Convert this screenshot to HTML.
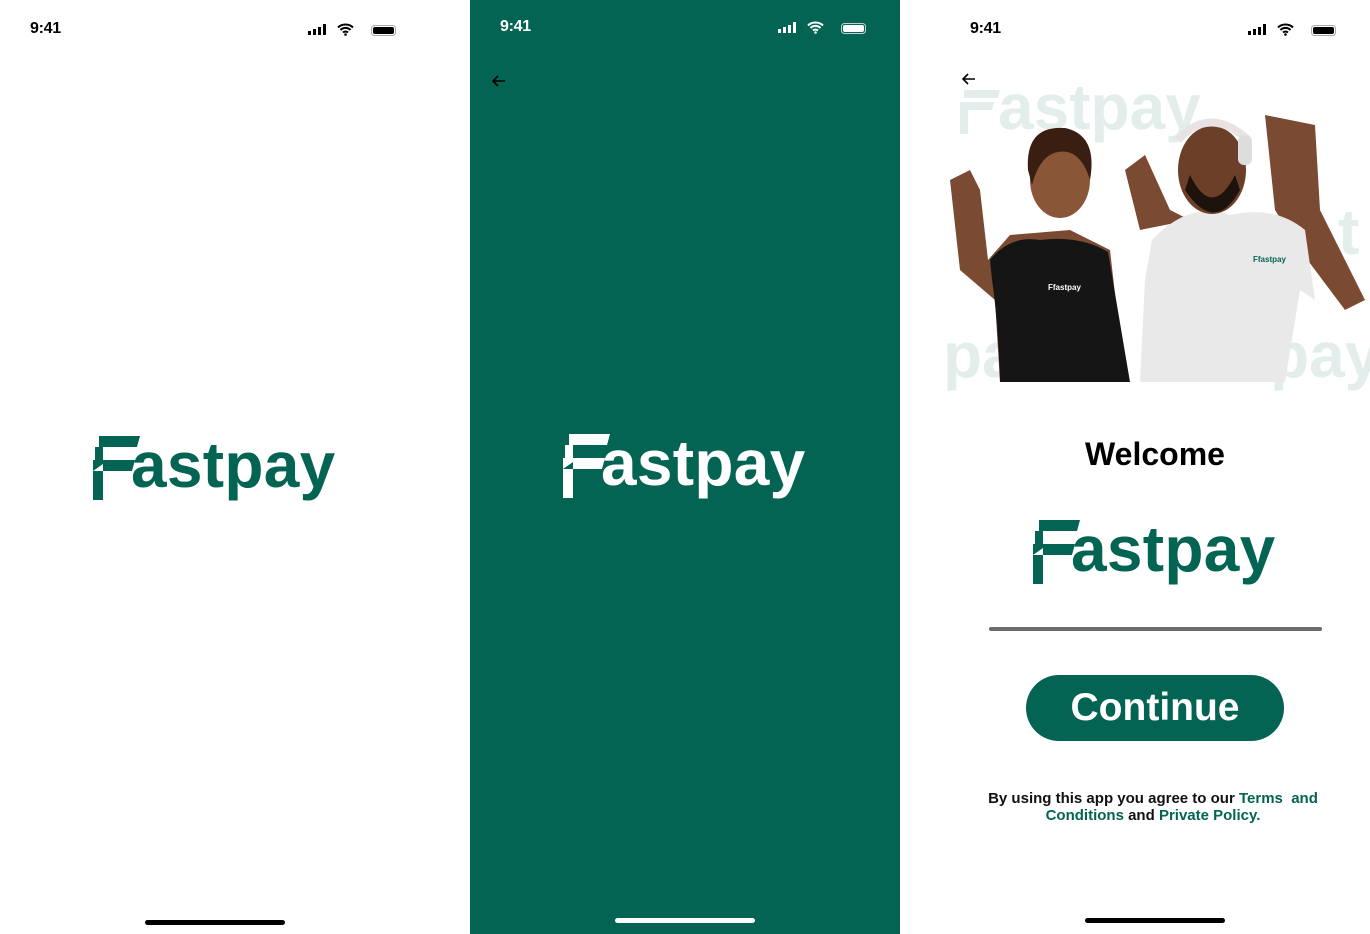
<!DOCTYPE html>
<html><head><meta charset="utf-8"><style>
*{margin:0;padding:0;box-sizing:border-box}
body{width:1370px;height:934px;position:relative;overflow:hidden;background:#fff;font-family:"Liberation Sans",sans-serif}
.scr{position:absolute;top:0;height:934px;width:430px;overflow:hidden}
.time{position:absolute;left:30px;top:20px;font-size:16px;font-weight:bold;letter-spacing:-0.3px}
.icons{position:absolute;left:308px;top:23px}
.home{position:absolute;left:145px;top:920px;width:140px;height:5px;border-radius:3px}
.logo{position:absolute;width:250px;height:70px}
.logo svg{position:absolute;left:0;top:0}
.logo span{position:absolute;left:38px;top:-8px;font-size:64px;font-weight:bold;letter-spacing:0.3px}
.ghost{position:absolute;font-weight:bold;color:#e3eeec;font-size:64px}
</style></head><body>

<div class="scr" style="left:0;background:#fff">
 <div class="time">9:41</div>
 <svg class="icons" width="90" height="16" viewBox="0 0 90 16">
  <rect x="0" y="8" width="3" height="4" fill="#000"/><rect x="5" y="6" width="3" height="6" fill="#000"/><rect x="10" y="4" width="3" height="8" fill="#000"/><rect x="15" y="1" width="3" height="11" fill="#000"/>
  <path d="M30 4.5a11 11 0 0 1 15 0M32.5 7a7 7 0 0 1 10 0M35 9.5a3.5 3.5 0 0 1 5 0" stroke="#000" stroke-width="2" fill="none"/><circle cx="37.5" cy="11.5" r="1.3" fill="#000"/>
  <rect x="63.5" y="2.5" width="24" height="10" rx="3" fill="none" stroke="#aaa"/><rect x="65" y="4" width="21" height="7" rx="2" fill="#000"/>
 </svg>
 <div class="logo" style="left:93px;top:436px;color:#036453">
  <svg width="50" height="68" viewBox="0 0 50 68"><path d="M6 0H47L44 11H6Z M0 24H42L39 35H10V64H0Z M2 11H10V24H2Z" fill="#036453"/><path d="M0 35L10 28V35Z" fill="#fff"/></svg>
  <span>astpay</span>
 </div>
 <div class="home" style="background:#000"></div>
</div>

<div class="scr" style="left:470px;background:#036453;color:#fff">
 <div class="time" style="top:18px">9:41</div>
 <svg class="icons" style="top:21px" width="90" height="16" viewBox="0 0 90 16">
  <rect x="0" y="8" width="3" height="4" fill="#fff"/><rect x="5" y="6" width="3" height="6" fill="#fff"/><rect x="10" y="4" width="3" height="8" fill="#fff"/><rect x="15" y="1" width="3" height="11" fill="#fff"/>
  <path d="M30 4.5a11 11 0 0 1 15 0M32.5 7a7 7 0 0 1 10 0M35 9.5a3.5 3.5 0 0 1 5 0" stroke="#fff" stroke-width="2" fill="none"/><circle cx="37.5" cy="11.5" r="1.3" fill="#fff"/>
  <rect x="63.5" y="2.5" width="24" height="10" rx="3" fill="none" stroke="#ccc"/><rect x="65" y="4" width="21" height="7" rx="2" fill="#fff"/>
 </svg>
 <svg style="position:absolute;left:21px;top:73px" width="16" height="16" viewBox="0 0 16 16"><path d="M14 8H2M7 3L2 8l5 5" stroke="#000" stroke-width="1.6" fill="none"/></svg>
 <div class="logo" style="left:93px;top:434px;color:#fff">
  <svg width="50" height="68" viewBox="0 0 50 68"><path d="M6 0H47L44 11H6Z M0 24H42L39 35H10V64H0Z M2 11H10V24H2Z" fill="#fff"/><path d="M0 35L10 28V35Z" fill="#036453"/></svg>
  <span>astpay</span>
 </div>
 <div class="home" style="background:#fff;top:918px"></div>
</div>

<div class="scr" style="left:940px;background:#fff">
 <div class="time">9:41</div>
 <svg class="icons" width="90" height="16" viewBox="0 0 90 16">
  <rect x="0" y="8" width="3" height="4" fill="#000"/><rect x="5" y="6" width="3" height="6" fill="#000"/><rect x="10" y="4" width="3" height="8" fill="#000"/><rect x="15" y="1" width="3" height="11" fill="#000"/>
  <path d="M30 4.5a11 11 0 0 1 15 0M32.5 7a7 7 0 0 1 10 0M35 9.5a3.5 3.5 0 0 1 5 0" stroke="#000" stroke-width="2" fill="none"/><circle cx="37.5" cy="11.5" r="1.3" fill="#000"/>
  <rect x="63.5" y="2.5" width="24" height="10" rx="3" fill="none" stroke="#aaa"/><rect x="65" y="4" width="21" height="7" rx="2" fill="#000"/>
 </svg>
 <div class="ghost" style="left:58px;top:70px">astpay</div>
 <svg style="position:absolute;left:20px;top:90px" width="40" height="44" viewBox="0 0 40 44"><path d="M4 0H40L38 8H4ZM0 12H34L32 20H8V44H0Z" fill="#e3eeec"/></svg>
 <div class="ghost" style="left:3px;top:318px">pa</div>
 <div class="ghost" style="left:330px;top:318px">pay</div>
 <div class="ghost" style="left:398px;top:195px">t</div>
 <svg style="position:absolute;left:0;top:100px" width="430" height="282" viewBox="0 0 430 282">
  <path d="M20 170 L10 80 L30 70 L40 90 L48 160 L70 135 L130 130 L170 150 L185 282 H60 L55 200 Z" fill="#7a4a32"/>
  <path d="M50 160 Q70 135 100 140 Q140 135 168 152 L190 282 H60 Q58 220 52 180 Z" fill="#151515"/>
  <ellipse cx="120" cy="80" rx="30" ry="38" fill="#8a5638"/>
  <path d="M88 70 Q85 25 125 28 Q158 35 150 80 Q140 48 118 52 Q100 55 92 85Z" fill="#3a1e12"/>
  <path d="M200 130 L185 70 L205 55 L230 110 L250 120 Z" fill="#7a4a32"/>
  <path d="M335 110 L325 15 L375 25 L380 110 L425 200 L405 210 L360 150 Z" fill="#7a4a32"/>
  <path d="M212 140 Q250 100 290 115 Q335 105 365 130 L375 200 L360 190 L345 282 H200 L205 180 Z" fill="#e9e9e9"/>
  <ellipse cx="272" cy="70" rx="34" ry="44" fill="#6b3f28"/>
  <path d="M250 75 Q272 120 295 75 L300 90 Q275 135 245 90Z" fill="#1e120c"/>
  <path d="M238 40 Q270 5 308 40" stroke="#e8e2e2" stroke-width="8" fill="none"/>
  <rect x="298" y="35" width="14" height="30" rx="6" fill="#ddd"/>
  <text x="313" y="162" font-size="8" font-weight="bold" fill="#036453" font-family="Liberation Sans">Ffastpay</text>
  <text x="108" y="190" font-size="8" font-weight="bold" fill="#fff" font-family="Liberation Sans">Ffastpay</text>
 </svg>
 <svg style="position:absolute;left:21px;top:71px" width="16" height="16" viewBox="0 0 16 16"><path d="M14 8H2M7 3L2 8l5 5" stroke="#000" stroke-width="1.6" fill="none"/></svg>

 <div style="position:absolute;left:0;width:430px;top:436px;text-align:center;font-size:32px;font-weight:bold;color:#000">Welcome</div>
 <div class="logo" style="left:93px;top:520px;color:#036453">
  <svg width="50" height="68" viewBox="0 0 50 68"><path d="M6 0H47L44 11H6Z M0 24H42L39 35H10V64H0Z M2 11H10V24H2Z" fill="#036453"/><path d="M0 35L10 28V35Z" fill="#fff"/></svg>
  <span>astpay</span>
 </div>
 <div style="position:absolute;left:49px;top:627px;width:333px;height:4px;background:#6b6b6b;border-radius:2px"></div>
 <div style="position:absolute;left:86px;top:675px;width:258px;height:66px;border-radius:33px;background:#036453;color:#fff;font-size:39px;font-weight:bold;text-align:center;line-height:66px">Continue</div>
 <div style="position:absolute;left:13px;width:400px;top:790px;text-align:center;font-size:15px;font-weight:bold;line-height:17px;color:#111">By using this app you agree to our <span style="color:#036453">Terms&nbsp; and Conditions</span> and <span style="color:#036453">Private Policy.</span></div>
 <div class="home" style="background:#000;top:918px"></div>
</div>
</body></html>
